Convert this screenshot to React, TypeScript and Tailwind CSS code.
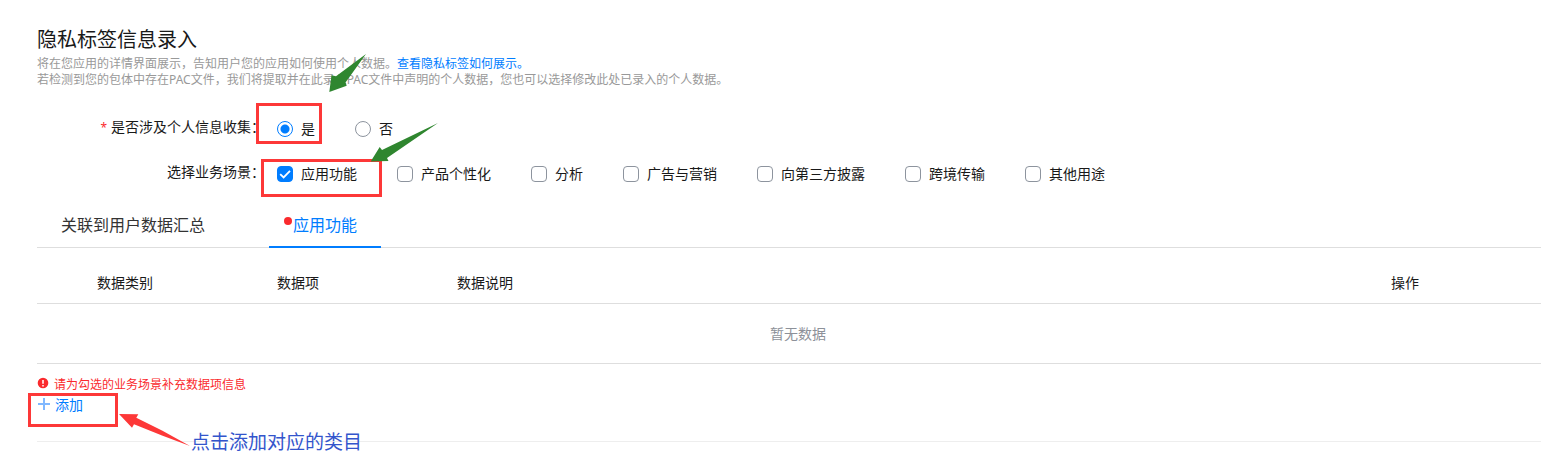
import { useState } from "react";

const scenarios = ["应用功能", "产品个性化", "分析", "广告与营销", "向第三方披露", "跨境传输", "其他用途"];

function Checkbox({ label, initial }: { label: string; initial: boolean }) {
  const [on, setOn] = useState(initial);
  return (
    <label className="flex items-center gap-2">
      <span className="relative flex size-4">
        <input
          type="checkbox"
          checked={on}
          onChange={() => setOn(!on)}
          className="size-4 appearance-none rounded border border-[#8d949e] bg-white checked:border-[#007dff] checked:bg-[#007dff]"
        />
        {on && (
          <svg viewBox="0 0 16 16" className="pointer-events-none absolute inset-0 size-4" fill="none" stroke="#fff" strokeWidth="1.8">
            <path d="M3.2 8.2 6.6 11.4 13 4.8" />
          </svg>
        )}
      </span>
      {label}
    </label>
  );
}

function Radio({ label, initial }: { label: string; initial: boolean }) {
  return (
    <label className="flex items-center gap-2">
      <input
        type="radio"
        name="collects"
        defaultChecked={initial}
        className="size-4 appearance-none rounded-full border border-[#8d949e] bg-white checked:border-[#007dff] checked:bg-[radial-gradient(circle,#007dff_4px,#fff_5px)]"
      />
      {label}
    </label>
  );
}

function Annotations() {
  return (
    <div className="pointer-events-none absolute inset-0">
      <div className="absolute left-[256px] top-[103px] h-[41px] w-[66px] border-3 border-[#fd3838]" />
      <div className="absolute left-[261px] top-[159px] h-[38px] w-[121px] border-3 border-[#fd3838]" />
      <div className="absolute left-[28px] top-[393px] h-[34px] w-[90px] border-3 border-[#fd3838]" />
      <svg className="absolute left-0 top-0 size-full">
        <path fill="#2f862f" d="M366 54 345.5 82.5 346.7 85.7 329.3 92 331.5 75.3 336 76.3Z" />
        <path fill="#2f862f" d="M438 123 387 158 388.5 161 370.7 161.5 379.7 147 382 150Z" />
        <path fill="#fd3838" d="M119 414 138.3 414.3 136.3 417.7 162 430.5 190 446 162 435.5 134 424.3 132 427.7Z" />
      </svg>
      <div className="absolute left-[191px] top-[428px] text-[19px] leading-7 text-[#3355cc]">点击添加对应的类目</div>
    </div>
  );
}

export default function App() {
  return (
    <main className="relative bg-white pb-5 pl-[37px] pt-6 font-['Noto_Sans','Noto_Sans_CJK_SC',sans-serif] text-sm text-[#191919]">
      <h1 className="text-xl leading-8">隐私标签信息录入</h1>
      <p className="text-xs leading-4 text-[#999]">
        将在您应用的详情界面展示，告知用户您的应用如何使用个人数据。
        <a href="#display" className="text-[#007dff]">查看隐私标签如何展示。</a>
        <br />
        若检测到您的包体中存在PAC文件，我们将提取并在此录入PAC文件中声明的个人数据，您也可以选择修改此处已录入的个人数据。
      </p>

      <form>
        <fieldset className="mt-[29px] flex gap-3">
          <span className="w-57 text-right leading-5">
            <span className="mr-1 text-xs text-[#fa2a2d]">*</span>是否涉及个人信息收集：
          </span>
          <div className="flex h-6 items-center gap-10">
            <Radio label="是" initial />
            <Radio label="否" initial={false} />
          </div>
        </fieldset>
        <fieldset className="mt-[21px] flex gap-3">
          <span className="w-57 text-right leading-5">选择业务场景：</span>
          <div className="flex h-6 items-center gap-10">
            {scenarios.map((s, i) => (
              <Checkbox key={s} label={s} initial={i === 0} />
            ))}
          </div>
        </fieldset>
      </form>

      <nav className="mt-[27px] flex gap-10 text-base leading-6 shadow-[inset_0_-1px_#dedede]">
        <button type="button" className="border-b-2 border-transparent px-6 pb-[9px] text-[#333]">关联到用户数据汇总</button>
        <button type="button" className="relative border-b-2 border-[#007dff] px-6 pb-[9px] text-[#007dff]">
          <span className="absolute left-[15px] top-1 size-2 rounded-full bg-[#fa2a2d]" />
          应用功能
        </button>
      </nav>

      <table className="w-full table-fixed border-separate border-spacing-0 leading-5">
        <thead>
          <tr className="text-left">
            <th className="w-60 border-b border-[#dedede] pb-2.5 pl-15 pt-[25px] font-normal">数据类别</th>
            <th className="w-45 border-b border-[#dedede] pb-2.5 pt-[25px] font-normal">数据项</th>
            <th className="border-b border-[#dedede] pb-2.5 pt-[25px] font-normal">数据说明</th>
            <th className="w-[150px] border-b border-[#dedede] pb-2.5 pt-[25px] font-normal">操作</th>
          </tr>
        </thead>
        <tbody>
          <tr>
            <td colSpan={4} className="h-15 border-b border-[#dedede] pl-[18px] text-center text-[#8d9199]">暂无数据</td>
          </tr>
        </tbody>
      </table>

      <p role="alert" className="mt-[13px] flex items-start gap-[5px] text-xs leading-4 text-[#fa2a2d]">
        <svg viewBox="0 0 12 12" className="size-3">
          <circle cx="6" cy="6" r="5.3" fill="#fa2a2d" />
          <path d="M6 3v3.8M6 7.9v1.5" stroke="#fff" strokeWidth="1.5" />
        </svg>
        请为勾选的业务场景补充数据项信息
      </p>
      <button type="button" className="flex items-center gap-1 leading-[23px] text-[#007dff]">
        <svg viewBox="0 0 14 14" className="size-3.5" stroke="#80b8ff" strokeWidth="2">
          <path d="M7 0v12M1 6h12" />
        </svg>
        添加
      </button>
      <hr className="mt-[25px] border-[#eee]" />
      <Annotations />
    </main>
  );
}
